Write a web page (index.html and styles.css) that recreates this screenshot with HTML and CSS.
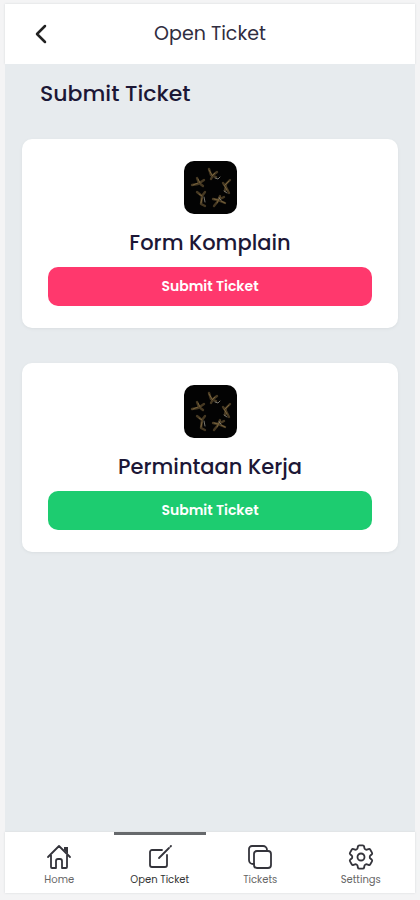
FILE: index.html
```html
<!DOCTYPE html>
<html lang="en">
<head>
<meta charset="utf-8">
<meta name="viewport" content="width=device-width, initial-scale=1">
<title>Open Ticket</title>
<link rel="stylesheet" href="styles.css">
</head>
<body>
<svg class="symbols" aria-hidden="true">
  <defs>
    <symbol id="emblem" viewBox="0 0 53 53">
      <rect width="53" height="53" rx="10" fill="#030303"/>
      <g fill="none" stroke-linecap="round" stroke-linejoin="round">
        <path d="M25 8l2 6 5 2M33 11l-4 3-2 4M13 17l2 5 4 3M8 24l6-1 6-4M46 19l-4 4-1 7M39 22l3 4 3 6M13 31l5 4 3-4M18 35l-1 8 4 2M29 38l5 1 6-3M36 35l-2 5-4 5M36 40l5 2" stroke="#453822" stroke-width="2.400"/>
        <path d="M25 9l3 5M31 12l-3 3M14 18l2 4M9 24l5-2M45 20l-4 4M40 24l3 5M15 33l3 2M18 37l-1 5M30 38l4 1M36 36l-3 6M37 40l4 2" stroke="#78633c" stroke-width="1"/>
        <path d="M31 17l3 1 2-2M40 30l3 2M20 36l1 5M35 37l2 2" stroke="#77756d" stroke-width="1"/>
      </g>
    </symbol>
  </defs>
</svg>
<div class="app">
  <header class="topbar">
    <button class="back" type="button" aria-label="Back">
      <svg viewBox="0 0 12 20"><path d="M10 2 2 10l8 8"/></svg>
    </button>
    <h1 class="topbar-title">Open Ticket</h1>
  </header>
  <main class="content">
    <h2 class="heading">Submit Ticket</h2>
    <section class="card">
      <svg class="emblem" aria-hidden="true"><use href="#emblem"/></svg>
      <h3 class="card-title">Form Komplain</h3>
      <button class="submit submit-pink" type="button">Submit Ticket</button>
    </section>
    <section class="card">
      <svg class="emblem" aria-hidden="true"><use href="#emblem"/></svg>
      <h3 class="card-title">Permintaan Kerja</h3>
      <button class="submit submit-green" type="button">Submit Ticket</button>
    </section>
  </main>
  <nav class="tabs">
    <a class="tab" href="#home">
      <svg class="tab-icon" viewBox="0 0 26 26"><path d="M2 13 13 2l11 11M5 11v12a1 1 0 0 0 1 1h4v-7a2 2 0 0 1 2-2h2a2 2 0 0 1 2 2v7h4a1 1 0 0 0 1-1V11"/><path class="solid" d="M18 3h4v7l-4-4z"/></svg>
      <span>Home</span>
    </a>
    <a class="tab tab-active" href="#open" aria-current="page">
      <svg class="tab-icon" viewBox="0 0 26 26"><path d="M15 6H5a2 2 0 0 0-2 2v13a2 2 0 0 0 2 2h13a2 2 0 0 0 2-2V11M12 14 22 4M23.500 2.500l.5-.5"/></svg>
      <span>Open Ticket</span>
    </a>
    <a class="tab" href="#tickets">
      <svg class="tab-icon" viewBox="0 0 26 26"><rect x="7" y="7" width="17" height="17" rx="3"/><path d="M7 20H6a4 4 0 0 1-4-4V5a3 3 0 0 1 3-3h11a4 4 0 0 1 4 4v1"/></svg>
      <span>Tickets</span>
    </a>
    <a class="tab" href="#settings">
      <svg class="tab-icon gear" viewBox="2 2 20 20"><path d="M9.594 3.94c.09-.542.56-.94 1.11-.94h2.593c.55 0 1.02.398 1.11.94l.213 1.281c.063.374.313.686.645.87.074.04.147.083.22.127.325.196.72.257 1.075.124l1.217-.456a1.125 1.125 0 0 1 1.37.49l1.296 2.247a1.125 1.125 0 0 1-.26 1.431l-1.003.827c-.293.241-.438.613-.43.992a7.723 7.723 0 0 1 0 .255c-.008.378.137.75.43.991l1.004.827c.424.35.534.955.26 1.43l-1.298 2.247a1.125 1.125 0 0 1-1.369.491l-1.217-.456c-.355-.133-.75-.072-1.076.124a6.47 6.47 0 0 1-.22.128c-.331.183-.581.495-.644.869l-.213 1.281c-.09.543-.56.94-1.11.94h-2.594c-.55 0-1.019-.398-1.11-.94l-.213-1.281c-.062-.374-.312-.686-.644-.87a6.52 6.52 0 0 1-.22-.127c-.325-.196-.72-.257-1.076-.124l-1.217.456a1.125 1.125 0 0 1-1.369-.49l-1.297-2.247a1.125 1.125 0 0 1 .26-1.431l1.004-.827c.292-.24.437-.613.43-.991a6.932 6.932 0 0 1 0-.255c.007-.38-.138-.751-.43-.992l-1.004-.827a1.125 1.125 0 0 1-.26-1.43l1.297-2.247a1.125 1.125 0 0 1 1.37-.491l1.216.456c.356.133.751.072 1.076-.124.072-.044.146-.086.22-.128.332-.183.582-.495.644-.869l.214-1.28Z"/><circle cx="12" cy="12" r="2.700"/></svg>
      <span>Settings</span>
    </a>
  </nav>
</div>
</body>
</html>
```
FILE: styles.css
```css
* {
  box-sizing: border-box;
}

body {
  margin: 0;
  background: #f4f4f5;
  color: #1c1736;
  font-family: Poppins, Inter, sans-serif;
}

.symbols {
  position: absolute;
  width: 0;
  height: 0;
}

.app {
  display: flex;
  flex-direction: column;
  min-height: 100vh;
  padding: 4px 5px 7px;
}

.topbar {
  display: grid;
  grid-template-columns: 60px 1fr 60px;
  align-items: center;
  height: 60px;
  background: #fff;
  box-shadow: 0 0 2px #d5d8da;
}

.back {
  display: flex;
  justify-content: center;
  margin: 0;
  padding: 0 0 0 12px;
  border: 0;
  background: none;
}

.back svg {
  width: 12px;
  height: 20px;
  fill: none;
  stroke: #222;
  stroke-width: 2.5;
  stroke-linecap: round;
  stroke-linejoin: round;
}

.topbar-title {
  margin: 0;
  font-size: 19px;
  font-weight: 400;
  line-height: 28px;
  text-align: center;
  color: #302d40;
}

.content {
  display: flex;
  flex: 1;
  flex-direction: column;
  gap: 35px;
  padding: 15px 17px;
  background: #e7ebee;
}

.heading {
  margin: 0 0 -5px;
  padding-left: 18px;
  font-size: 22px;
  font-weight: 500;
  line-height: 30px;
}

.card {
  display: flex;
  flex-direction: column;
  align-items: center;
  padding: 22px 26px;
  border-radius: 10px;
  background: #fff;
  box-shadow: 0 1px 3px #d9dee1;
}

.emblem {
  width: 53px;
  height: 53px;
}

.card-title {
  margin: 13px 0 9px;
  font-size: 21px;
  font-weight: 500;
  line-height: 31px;
}

.submit {
  width: 100%;
  height: 39px;
  margin: 0;
  padding: 0;
  border: 0;
  border-radius: 10px;
  color: #fff;
  font: inherit;
  font-size: 14px;
  font-weight: 600;
}

.submit-pink {
  background: #ff386d;
}

.submit-green {
  background: #1dcc70;
}

.tabs {
  display: grid;
  grid-template-columns: repeat(4, 1fr);
  height: 61px;
  padding: 0 4px;
  background: #fff;
  box-shadow: 0 0 2px #d5d8da;
}

.tab {
  display: flex;
  flex-direction: column;
  align-items: center;
  gap: 4px;
  margin: 0 4px;
  padding-top: 9px;
  border-top: 3px solid transparent;
  color: #666;
  font-size: 10px;
  line-height: 12px;
  text-decoration: none;
}

.tab-active {
  border-top-color: #66696c;
  color: #333;
}

.tab-icon {
  width: 26px;
  height: 26px;
  fill: none;
  stroke: #34343b;
  stroke-width: 1.8;
  stroke-linecap: round;
  stroke-linejoin: round;
}

.tab-icon .solid {
  fill: #34343b;
  stroke: none;
}

.gear {
  stroke-width: 1.4;
}
```
